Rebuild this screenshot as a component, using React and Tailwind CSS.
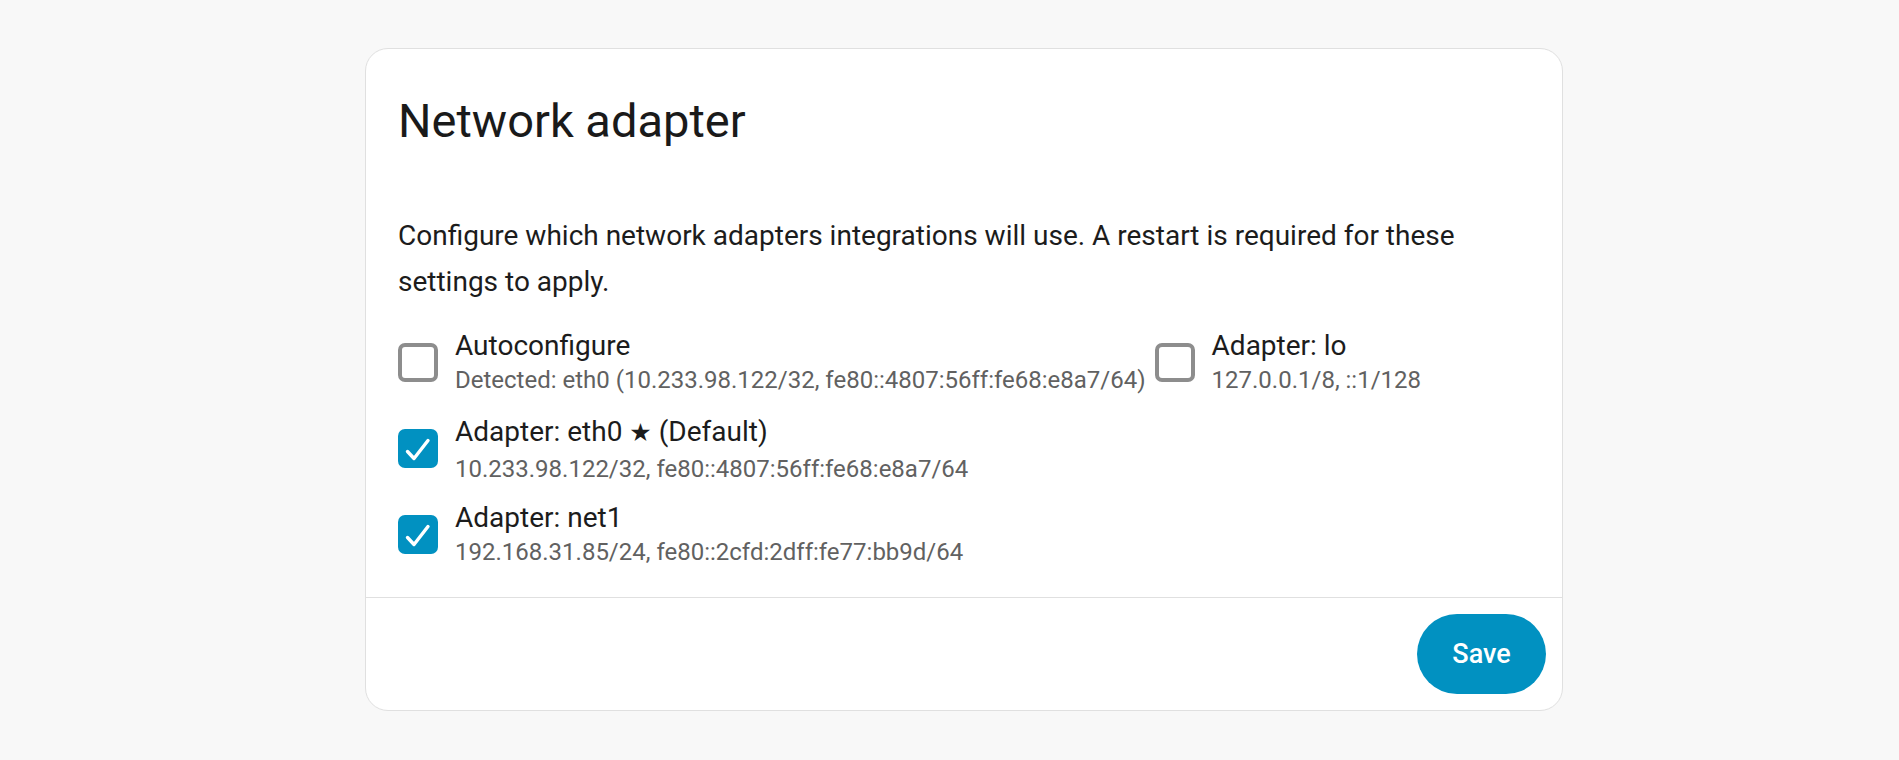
import { useState } from 'react';

const adapters = {
  auto: {
    label: 'Autoconfigure',
    detail: 'Detected: eth0 (10.233.98.122/32, fe80::4807:56ff:fe68:e8a7/64)',
  },
  lo: { label: 'Adapter: lo', detail: '127.0.0.1/8, ::1/128' },
  eth0: {
    label: 'Adapter: eth0',
    star: true,
    detail: '10.233.98.122/32, fe80::4807:56ff:fe68:e8a7/64',
  },
  net1: { label: 'Adapter: net1', detail: '192.168.31.85/24, fe80::2cfd:2dff:fe77:bb9d/64' },
};

function Checkbox({ checked, onChange }) {
  return (
    <button
      type="button"
      onClick={onChange}
      className={`w-[40px] h-[39px] shrink-0 rounded-[7px] flex items-center justify-center ${
        checked ? 'bg-[#0191c1]' : 'border-[4px] border-[#8d8d8d] bg-white'
      }`}
    >
      {checked && (
        <svg width="40" height="39" viewBox="0 0 40 39" fill="none">
          <path d="M9.5 22.5 L16 29.5 L30 11.5" stroke="white" strokeWidth="3.4" strokeLinecap="round" strokeLinejoin="round" />
        </svg>
      )}
    </button>
  );
}

function AdapterOption({ item, checked, onToggle, className = '' }) {
  return (
    <div className={`flex items-center ${className}`}>
      <Checkbox checked={checked} onChange={onToggle} />
      <div className="ml-[17px] pt-[4px]">
        <div className={`text-[28px] text-[#1c1c1c] ${item.star ? 'leading-[37px]' : 'leading-[32px]'}`}>
          {item.label}
          {item.star && (
            <>
              {' '}
              <span className="text-[25px]" style={{ fontFamily: '"DejaVu Sans", sans-serif' }}>★</span> (Default)
            </>
          )}
        </div>
        <div className="text-[24px] leading-[36px] text-[#616161]">{item.detail}</div>
      </div>
    </div>
  );
}

export default function App() {
  const [selected, setSelected] = useState({ auto: false, lo: false, eth0: true, net1: true });
  const toggle = (key) => setSelected((prev) => ({ ...prev, [key]: !prev[key] }));

  return (
    <div className="min-h-[760px] bg-[#f8f8f8] pt-[48px] font-['Roboto',sans-serif]">
      {/* Card */}
      <div className="ml-[365px] w-[1198px] bg-white border border-[#e0e0e0] rounded-[23px] overflow-hidden">
        <div className="pt-[44px] px-[32px] text-[47px] leading-[56px] text-[#1a1a1a]">Network adapter</div>

        <div className="px-[32px] pt-[64px] pb-[20px]">
          <p className="text-[28px] leading-[46px] text-[#1c1c1c] pr-[20px]">
            Configure which network adapters integrations will use. A restart is required for these settings to apply.
          </p>

          <div className="mt-[14px]">
            <div className="h-[86px] flex items-center">
              <AdapterOption item={adapters.auto} checked={selected.auto} onToggle={() => toggle('auto')} />
              <AdapterOption item={adapters.lo} checked={selected.lo} onToggle={() => toggle('lo')} className="ml-[9px]" />
            </div>
            <div className="h-[86px] flex items-center">
              <AdapterOption item={adapters.eth0} checked={selected.eth0} onToggle={() => toggle('eth0')} />
            </div>
            <div className="h-[86px] flex items-center">
              <AdapterOption item={adapters.net1} checked={selected.net1} onToggle={() => toggle('net1')} />
            </div>
          </div>
        </div>

        {/* Actions */}
        <div className="border-t border-[#e0e0e0] p-[16px] flex justify-end">
          <button className="w-[129px] h-[80px] rounded-full bg-[#0191c1] text-white text-[27px] font-medium">
            Save
          </button>
        </div>
      </div>
    </div>
  );
}
